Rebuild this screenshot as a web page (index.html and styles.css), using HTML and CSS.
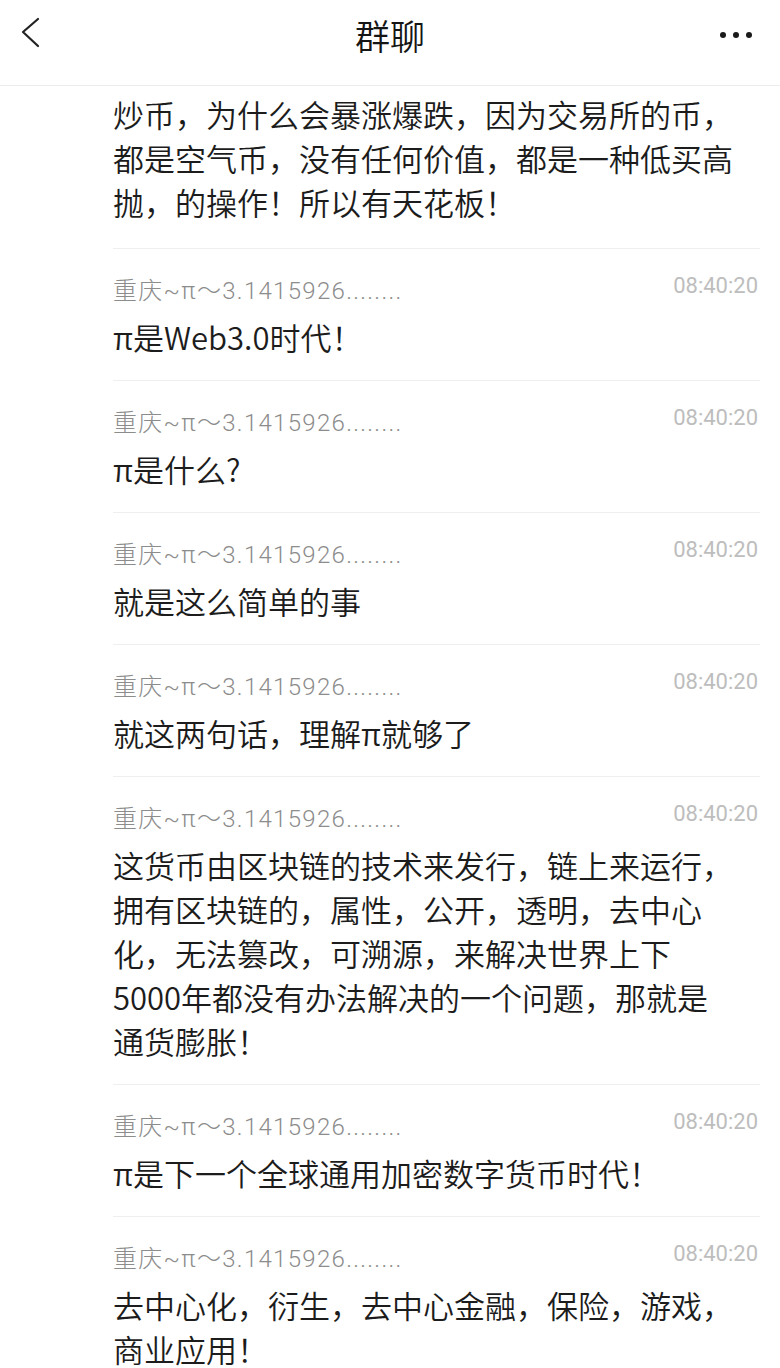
FILE: index.html
```html
<!DOCTYPE html>
<html lang="zh-CN">
<head>
<meta charset="utf-8">
<title>群聊</title>
<link rel="stylesheet" href="styles.css">
</head>
<body>
<header class="topbar">
  <div class="back">
    <svg width="24" height="40" viewBox="0 0 24 40"><polyline points="17,4 2,17 17,31" fill="none" stroke="#222" stroke-width="2.2" stroke-linecap="round" stroke-linejoin="round"/></svg>
  </div>
  <div class="title">群聊</div>
  <div class="more"><span></span><span></span><span></span></div>
</header>
<main class="list">
  <section class="msg msg-first">
    <p class="body">炒币，为什么会暴涨爆跌，因为交易所的币，<br>都是空气币，没有任何价值，都是一种低买高<br>抛，的操作！所以有天花板！</p>
  </section>
  <section class="msg">
    <div class="meta"><span class="name">重庆~π～3.1415926........</span><span class="time">08:40:20</span></div>
    <p class="body">π是Web3.0时代！</p>
  </section>
  <section class="msg">
    <div class="meta"><span class="name">重庆~π～3.1415926........</span><span class="time">08:40:20</span></div>
    <p class="body">π是什么?</p>
  </section>
  <section class="msg">
    <div class="meta"><span class="name">重庆~π～3.1415926........</span><span class="time">08:40:20</span></div>
    <p class="body">就是这么简单的事</p>
  </section>
  <section class="msg">
    <div class="meta"><span class="name">重庆~π～3.1415926........</span><span class="time">08:40:20</span></div>
    <p class="body">就这两句话，理解π就够了</p>
  </section>
  <section class="msg">
    <div class="meta"><span class="name">重庆~π～3.1415926........</span><span class="time">08:40:20</span></div>
    <p class="body">这货币由区块链的技术来发行，链上来运行，<br>拥有区块链的，属性，公开，透明，去中心<br>化，无法篡改，可溯源，来解决世界上下<br>5000年都没有办法解决的一个问题，那就是<br>通货膨胀！</p>
  </section>
  <section class="msg">
    <div class="meta"><span class="name">重庆~π～3.1415926........</span><span class="time">08:40:20</span></div>
    <p class="body">π是下一个全球通用加密数字货币时代！</p>
  </section>
  <section class="msg">
    <div class="meta"><span class="name">重庆~π～3.1415926........</span><span class="time">08:40:20</span></div>
    <p class="body">去中心化，衍生，去中心金融，保险，游戏，<br>商业应用！</p>
  </section>
</main>
</body>
</html>
```
FILE: styles.css
```css
html, body {
  margin: 0;
  padding: 0;
  background: #ffffff;
}
body {
  width: 780px;
  height: 1368px;
  overflow: hidden;
  font-family: Roboto, "Noto Sans CJK SC", sans-serif;
  color: #1f1f1f;
}
.topbar {
  height: 70px;
  padding-bottom: 15px;
  border-bottom: 1px solid #ececec;
  display: grid;
  grid-template-columns: 1fr auto 1fr;
  align-items: center;
}
.back {
  padding-left: 21px;
  display: flex;
  align-items: center;
}
.back svg { display: block; }
.title {
  font-family: "Noto Sans CJK SC", sans-serif;
  font-size: 35px;
  font-weight: 350;
  color: #151515;
  line-height: 40px;
}
.more {
  justify-self: end;
  padding-right: 28px;
  display: flex;
  gap: 7px;
}
.more span {
  width: 6px;
  height: 6px;
  border-radius: 50%;
  background: #1a1a1a;
}
.list {
  padding: 0 20px 0 113px;
}
.msg {
  border-top: 1px solid #efefef;
  padding: 18px 0 21px;
}
.msg-first {
  border-top: none;
  padding: 6px 0 24px;
}
.meta {
  display: flex;
  justify-content: space-between;
  align-items: flex-start;
  height: 48px;
}
.name {
  font-size: 24px;
  letter-spacing: 1.3px;
  line-height: 48px;
  color: #8c8c8c;
  font-weight: 300;
}
.time {
  font-size: 22px;
  line-height: 38px;
  color: #bdbdbd;
  padding-right: 2px;
}
.body {
  margin: 0;
  font-size: 31px;
  line-height: 44px;
  color: #1c1c1c;
  font-weight: 350;
  font-family: "Noto Sans CJK SC", sans-serif;
}
```
